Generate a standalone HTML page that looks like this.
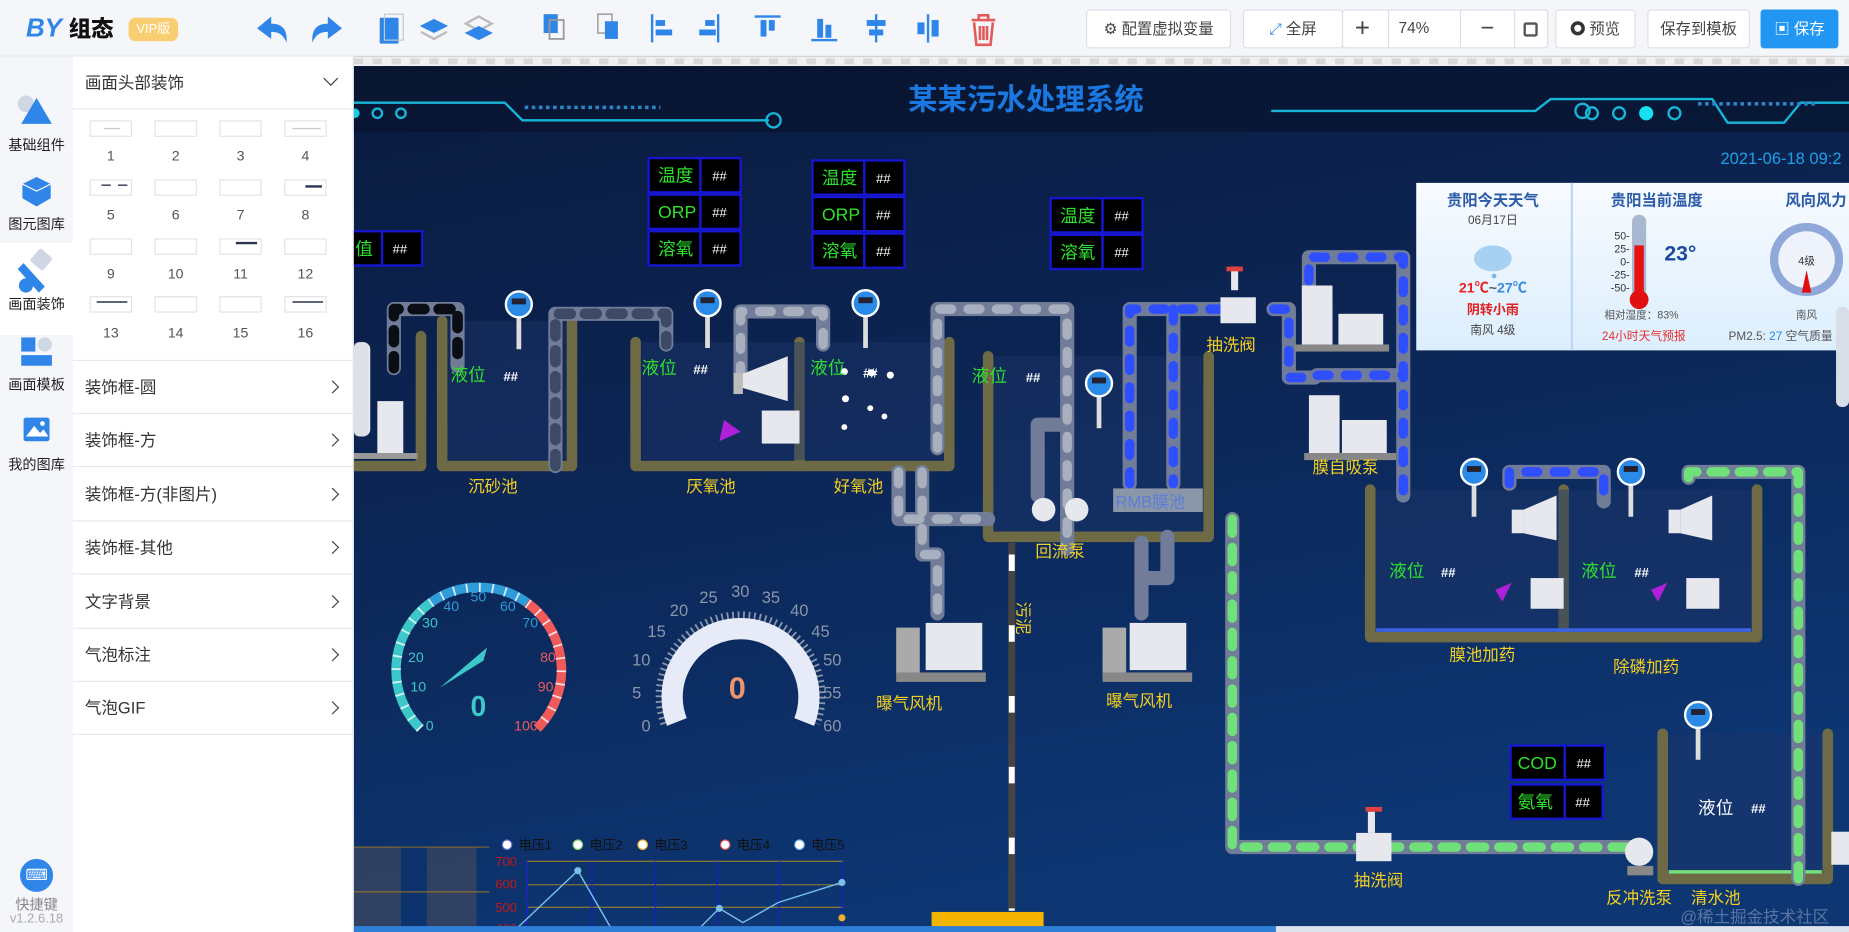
<!DOCTYPE html>
<html><head><meta charset="utf-8">
<style>
*{margin:0;padding:0;box-sizing:border-box}
html,body{width:1849px;height:932px;overflow:hidden;background:#fff}
#root{position:absolute;left:0;top:0;width:1568px;height:790px;transform:scale(1.17921,1.17975);transform-origin:0 0;font-family:"Liberation Sans","Noto Sans CJK SC",sans-serif;color:#333}
.hdr{position:absolute;left:0;top:0;width:1568px;height:48px;background:#f4f6f9;border-bottom:1px solid #e4e7ed}
.logo{position:absolute;left:22px;top:10px;font-size:22px;font-weight:bold;font-style:italic;color:#2f86e8}
.logo b{font-style:normal;color:#111;font-size:19px}
.vip{position:absolute;left:109px;top:15px;width:42px;height:20px;border-radius:6px;background:#f9cd72;color:#fff;font-size:11px;text-align:center;line-height:20px}
.btn{position:absolute;top:8px;height:33px;border:1px solid #dcdfe6;background:#fff;border-radius:3px;font-size:13px;color:#444;line-height:31px;text-align:center}
.side{position:absolute;left:0;top:48px;width:62px;height:742px;background:#f4f6f9}
.side .it{position:absolute;left:0;width:62px;text-align:center;font-size:12px;color:#222}
.panel{position:absolute;left:62px;top:48px;width:238px;height:742px;background:#fff;border-right:1px solid #e4e7ed}
.row{position:absolute;left:0;width:238px;height:45px;border-bottom:1px solid #e8e8e8;font-size:14px;color:#333;line-height:45px;padding-left:10px}
.row.ch:after{content:"";position:absolute;right:14px;top:18px;width:7px;height:7px;border-top:1.5px solid #444;border-right:1.5px solid #444;transform:rotate(45deg)}
.th{position:absolute;width:36px;height:14px;border:1px solid #e3e3e3}
.tn{position:absolute;width:36px;text-align:center;font-size:12px;color:#555}
.cv{position:absolute;left:300px;top:48px;width:1268px;height:742px;overflow:hidden}
</style></head><body><div id="root">

<div class="hdr">
 <div class="logo">BY <b>组态</b></div>
 <div class="vip">VIP版</div>
 <svg style="position:absolute;left:210px;top:8px" width="640" height="34" viewBox="0 0 640 34">
  <g fill="#2f86e8">
   <path d="M8 16 L20 6 L20 12 C30 12 34 18 33 28 C30 21 26 19 20 19 L20 25 Z"/>
   <path d="M80 16 L68 6 L68 12 C58 12 54 18 55 28 C58 21 62 19 68 19 L68 25 Z"/>
   <g transform="translate(10 0)">
   <rect x="102" y="7" width="16" height="22" rx="1"/><rect x="106" y="4" width="16" height="22" fill="none" stroke="#c0c8d4"/>
   <path d="M148 8 L160 14 L148 20 L136 14Z"/><path d="M137 19 L148 25 L159 19" fill="none" stroke="#bbb" stroke-width="2"/>
   <path d="M186 6 L197 12 L186 18 L175 12Z" fill="none" stroke="#bbb" stroke-width="2"/><path d="M186 14 L198 20 L186 26 L174 20Z"/>
   <rect x="241" y="4" width="12" height="16"/><rect x="246" y="9" width="12" height="16" fill="none" stroke="#999" stroke-width="1.5"/>
   <rect x="287" y="4" width="12" height="16" fill="none" stroke="#aaa" stroke-width="1.5"/><rect x="293" y="10" width="11" height="15"/>
   <rect x="332" y="4" width="2" height="24"/><rect x="336" y="9" width="8" height="5"/><rect x="336" y="17" width="14" height="5"/>
   <rect x="388" y="4" width="2" height="24"/><rect x="378" y="9" width="8" height="5"/><rect x="373" y="17" width="14" height="5"/>
   <rect x="420" y="5" width="22" height="2"/><rect x="425" y="9" width="5" height="14"/><rect x="432" y="9" width="5" height="9"/>
   <rect x="468" y="25" width="22" height="2"/><rect x="473" y="8" width="5" height="16"/><rect x="480" y="13" width="5" height="11"/>
   <rect x="522" y="4" width="2" height="24"/><rect x="515" y="9" width="16" height="5"/><rect x="517" y="17" width="12" height="5"/>
   <rect x="566" y="4" width="2" height="24"/><rect x="558" y="11" width="6" height="10"/><rect x="570" y="9" width="6" height="14"/>
   </g>
  </g>
  <g fill="none" stroke="#e35a5a" stroke-width="2.2"><path d="M614 9 H634 M620 9 V5 H628 V9 M616 11 L618 30 H630 L632 11 M621 14 V26 M624 14 V26 M627 14 V26"/></g>
 </svg>
 <div class="btn" style="left:921px;width:123px">⚙ 配置虚拟变量</div>
 <div class="btn" style="left:1054px;width:85px"><span style="color:#2f86e8">⤢</span> 全屏</div>
 <div class="btn" style="left:1138px;width:175px;text-align:left">
  <span style="position:absolute;left:10px;font-size:22px;line-height:29px">+</span>
  <span style="position:absolute;left:38px;top:-1px;width:62px;height:33px;border-left:1px solid #dcdfe6;border-right:1px solid #dcdfe6;padding-left:8px">74%</span>
  <span style="position:absolute;left:100px;width:46px;height:31px;border-right:1px solid #dcdfe6;text-align:center;font-size:20px">−</span>
  <span style="position:absolute;left:153px;top:10px;width:12px;height:12px;border:2px solid #555;border-radius:2px"></span></div>
 <div class="btn" style="left:1319px;width:68px"><span style="display:inline-block;width:12px;height:12px;border-radius:50%;border:3px solid #333;vertical-align:-1px"></span> 预览</div>
 <div class="btn" style="left:1397px;width:87px">保存到模板</div>
 <div class="btn" style="left:1493px;width:66px;background:#2196f3;border-color:#2196f3;color:#fff">▣ 保存</div>
</div>

<div class="side">
 <svg style="position:absolute;left:0;top:0" width="62" height="360">
  <circle cx="22" cy="40" r="7" fill="#cfd6e4"/><path d="M31 35 L44 57 H18Z" fill="#2f86e8"/>
  <path d="M31 102 L43 108 V120 L31 127 L19 120 V108Z" fill="#2f86e8"/><path d="M19 108 L31 114 L43 108" stroke="#fff" stroke-width="1" fill="none"/>
  <rect x="0" y="158" width="62" height="78" fill="#fff"/>
  <rect x="28" y="165" width="14" height="14" rx="2" fill="#cfd6e4" transform="rotate(40 35 172)"/><path d="M20 175 L38 195 L33 200 L15 180Z" fill="#2f86e8"/><circle cx="22" cy="194" r="6" fill="#2f86e8"/>
  <rect x="18" y="238" width="12" height="12" fill="#2f86e8"/><circle cx="38" cy="244" r="6" fill="#cfd6e4"/><rect x="18" y="253" width="26" height="9" fill="#2f86e8"/>
  <rect x="20" y="306" width="22" height="20" rx="2" fill="#2f86e8"/><path d="M22 322 L29 313 L34 319 L37 316 L41 322Z" fill="#fff"/><circle cx="36" cy="311" r="2" fill="#fff"/>
 </svg>
 <div class="it" style="top:66px">基础组件</div>
 <div class="it" style="top:133px">图元图库</div>
 <div class="it" style="top:201px">画面装饰</div>
 <div class="it" style="top:269px">画面模板</div>
 <div class="it" style="top:337px">我的图库</div>
 <div style="position:absolute;left:17px;top:680px;width:28px;height:28px;border-radius:50%;background:#2f86e8;color:#fff;font-size:13px;text-align:center;line-height:28px">⌨</div>
 <div class="it" style="top:710px;color:#888">快捷键</div>
 <div class="it" style="top:725px;color:#aaa;font-size:11px">v1.2.6.18</div>
</div>

<div class="panel">
 <div class="row" style="top:0;font-size:14px">画面头部装饰</div>
 <div style="position:absolute;right:14px;top:14px;width:9px;height:9px;border-right:1.5px solid #444;border-bottom:1.5px solid #444;transform:rotate(45deg)"></div>
 <div class="th" style="left:14px;top:54px"></div><div class="th" style="left:69px;top:54px"></div><div class="th" style="left:124px;top:54px"></div><div class="th" style="left:179px;top:54px"></div>
 <div class="tn" style="left:14px;top:77px">1</div><div class="tn" style="left:69px;top:77px">2</div><div class="tn" style="left:124px;top:77px">3</div><div class="tn" style="left:179px;top:77px">4</div>
 <div class="th" style="left:14px;top:104px"></div><div class="th" style="left:69px;top:104px"></div><div class="th" style="left:124px;top:104px"></div><div class="th" style="left:179px;top:104px"></div>
 <div class="tn" style="left:14px;top:127px">5</div><div class="tn" style="left:69px;top:127px">6</div><div class="tn" style="left:124px;top:127px">7</div><div class="tn" style="left:179px;top:127px">8</div>
 <div class="th" style="left:14px;top:154px"></div><div class="th" style="left:69px;top:154px"></div><div class="th" style="left:124px;top:154px"></div><div class="th" style="left:179px;top:154px"></div>
 <div class="tn" style="left:14px;top:177px">9</div><div class="tn" style="left:69px;top:177px">10</div><div class="tn" style="left:124px;top:177px">11</div><div class="tn" style="left:179px;top:177px">12</div>
 <div class="th" style="left:14px;top:203px"></div><div class="th" style="left:69px;top:203px"></div><div class="th" style="left:124px;top:203px"></div><div class="th" style="left:179px;top:203px"></div>
 <div class="tn" style="left:14px;top:227px">13</div><div class="tn" style="left:69px;top:227px">14</div><div class="tn" style="left:124px;top:227px">15</div><div class="tn" style="left:179px;top:227px">16</div>
 <svg style="position:absolute;left:0;top:0" width="238" height="260"><g stroke="#2a3350" stroke-width="1.2">
  <path d="M24 109 H32 M38 109 H46"/><path d="M197 110 H211" stroke-width="2"/><path d="M138 158 H156" stroke-width="2"/><path d="M20 208 H46"/><path d="M186 208 H212"/><path d="M26 61 H40" stroke="#ccc"/><path d="M186 61 H210" stroke="#ccc"/></g></svg>
 <div style="position:absolute;left:0;top:257px;width:238px;border-top:1px solid #e8e8e8"></div>
 <div class="row ch" style="top:258px">装饰框-圆</div>
 <div class="row ch" style="top:303px">装饰框-方</div>
 <div class="row ch" style="top:349px">装饰框-方(非图片)</div>
 <div class="row ch" style="top:394px">装饰框-其他</div>
 <div class="row ch" style="top:440px">文字背景</div>
 <div class="row ch" style="top:485px">气泡标注</div>
 <div class="row ch" style="top:530px">气泡GIF</div>
</div>

<div class="cv">
<svg width="1268" height="742" viewBox="300 48 1268 742" style="position:absolute;left:0;top:0;font-family:'Liberation Sans','Noto Sans CJK SC',sans-serif">
 <defs>
  <linearGradient id="bg" x1="0" y1="0" x2="0.3" y2="1"><stop offset="0" stop-color="#0a1a3d"/><stop offset="0.5" stop-color="#0c2656"/><stop offset="1" stop-color="#0d3673"/></linearGradient>
  <linearGradient id="wt" x1="0" y1="0" x2="0" y2="1"><stop offset="0" stop-color="#f8fbff"/><stop offset="1" stop-color="#dceefd"/></linearGradient>
 </defs>
 <rect x="300" y="48" width="1268" height="742" fill="url(#bg)"/>
 <rect x="300" y="48" width="1268" height="8" fill="#f0f0f0"/>
 <path d="M300 52 H1568" stroke="#d8d8d8" stroke-width="5" stroke-dasharray="8 8"/>
 <rect x="300" y="56" width="1268" height="56" fill="#07142e" opacity="0.7"/>
 <path d="M300 87 H428 L443 102 H652" stroke="#17b6d8" stroke-width="2" fill="none"/><circle cx="656" cy="102" r="6" stroke="#17b6d8" stroke-width="2" fill="none"/>
 <path d="M445 91 H560" stroke="#2a86c8" stroke-width="3" stroke-dasharray="3 3"/>
 <circle cx="301" cy="96" r="4" fill="#17d0e8"/><circle cx="320" cy="96" r="4" stroke="#17b6d8" stroke-width="2" fill="none"/><circle cx="340" cy="96" r="4" stroke="#17b6d8" stroke-width="2" fill="none"/>
 <path d="M1078 94 H1302 L1315 84 H1452 L1465 104 H1513 L1527 87 H1568" stroke="#17b6d8" stroke-width="2" fill="none"/><circle cx="1342" cy="94" r="6" stroke="#17b6d8" stroke-width="2" fill="none"/>
 <path d="M1440 88 H1540" stroke="#2a86c8" stroke-width="3" stroke-dasharray="3 3"/>
 <circle cx="1350" cy="96" r="5" stroke="#17b6d8" stroke-width="2" fill="none"/><circle cx="1373" cy="96" r="5" stroke="#17b6d8" stroke-width="2" fill="none"/><circle cx="1396" cy="96" r="6" fill="#17e0f0"/><circle cx="1420" cy="96" r="5" stroke="#17b6d8" stroke-width="2" fill="none"/>
 <text x="870" y="93" text-anchor="middle" font-size="25" font-weight="bold" fill="#1a78e0">某某污水处理系统</text>
 <text x="1459" y="139" font-size="14" fill="#1ea0e8">2021-06-18  09:2</text>

 <g fill="none" stroke="#6d6a45" stroke-width="9" stroke-linejoin="round" stroke-linecap="round">
  <path d="M300 395 H357 V285"/>
  <path d="M375 272 V395 H485 V272"/>
  <path d="M539 290 V395 H805 V290"/><path d="M678 290 V395"/>
  <path d="M838 302 V455 H1025 V302"/>
  <path d="M1162 415 V540 H1490 V415"/><path d="M1326 415 V540"/>
  <path d="M1410 622 V745 H1550 V622"/>
 </g>
 <g fill="#1d3568" opacity="0.45"><rect x="380" y="272" width="100" height="118"/><rect x="544" y="290" width="256" height="100"/><rect x="843" y="302" width="177" height="148"/><rect x="1167" y="415" width="318" height="120"/><rect x="1415" y="622" width="130" height="118"/></g>
 <path d="M1167 534 H1485" stroke="#3a63e8" stroke-width="3"/><path d="M1415 739 H1545" stroke="#78e07a" stroke-width="3"/>

 <g fill="none" stroke-linecap="round" stroke-linejoin="round">
  <g stroke="#707c98" stroke-width="12">
   <path d="M334 312 V262 H388 V310"/><path d="M471 395 V266 H565 V292"/>
   <path d="M628 320 V264 H698 V292"/><path d="M795 380 V262 H905 V465"/>
   <path d="M762 400 V440 H838"/><path d="M782 400 V470 H795 V520"/>
   <path d="M880 420 V360 H905"/>
   <path d="M958 410 V262 H1040"/><path d="M995 262 V410"/><path d="M1080 262 H1093 V320 H1115"/><path d="M1110 262 V218 H1190 V420"/><path d="M1117 318 H1190"/>
   <path d="M968 460 V520"/><path d="M968 490 H990 V455"/>
   <path d="M1045 440 V718 H1390"/><path d="M1432 405 V400 H1525 V745"/>
   <path d="M1280 410 V400 H1360 V425"/>
  </g>
  <g stroke="#0b0d14" stroke-width="9" stroke-dasharray="10 12"><path d="M334 312 V262 H388 V310"/></g>
  <g stroke="#3d4a66" stroke-width="9" stroke-dasharray="10 12"><path d="M471 395 V266 H565 V292"/></g>
  <g stroke="#a8b0c0" stroke-width="8" stroke-dasharray="10 14"><path d="M628 320 V264 H698 V292"/><path d="M795 380 V262 H905 V465"/><path d="M762 400 V440 H838"/><path d="M782 400 V470 H795 V520"/></g>
  <g stroke="#2f4fff" stroke-width="8" stroke-dasharray="10 14"><path d="M958 410 V262 H1040"/><path d="M995 262 V410"/><path d="M1080 262 H1093 V320 H1115"/><path d="M1110 262 V218 H1190 V420"/><path d="M1117 318 H1190"/><path d="M1280 410 V400 H1360 V425"/></g>
  <g stroke="#6fe07a" stroke-width="8" stroke-dasharray="12 12"><path d="M1045 440 V718 H1390"/><path d="M1432 405 V400 H1525 V745"/></g>
 </g>

 <g>
  <g transform="translate(440 258)"><rect x="-2" y="10" width="4" height="28" fill="#ddd"/><circle r="11" fill="#2a8ae8" stroke="#fff" stroke-width="2"/><rect x="-6" y="-5" width="12" height="5" fill="#223"/></g>
  <g transform="translate(600 257)"><rect x="-2" y="10" width="4" height="28" fill="#ddd"/><circle r="11" fill="#2a8ae8" stroke="#fff" stroke-width="2"/><rect x="-6" y="-5" width="12" height="5" fill="#223"/></g>
  <g transform="translate(734 257)"><rect x="-2" y="10" width="4" height="28" fill="#ddd"/><circle r="11" fill="#2a8ae8" stroke="#fff" stroke-width="2"/><rect x="-6" y="-5" width="12" height="5" fill="#223"/></g>
  <g transform="translate(932 325)"><rect x="-2" y="10" width="4" height="28" fill="#ddd"/><circle r="11" fill="#2a8ae8" stroke="#fff" stroke-width="2"/><rect x="-6" y="-5" width="12" height="5" fill="#223"/></g>
  <g transform="translate(1250 400)"><rect x="-2" y="10" width="4" height="28" fill="#ddd"/><circle r="11" fill="#2a8ae8" stroke="#fff" stroke-width="2"/><rect x="-6" y="-5" width="12" height="5" fill="#223"/></g>
  <g transform="translate(1383 400)"><rect x="-2" y="10" width="4" height="28" fill="#ddd"/><circle r="11" fill="#2a8ae8" stroke="#fff" stroke-width="2"/><rect x="-6" y="-5" width="12" height="5" fill="#223"/></g>
  <g transform="translate(1440 606)"><rect x="-2" y="10" width="4" height="28" fill="#ddd"/><circle r="11" fill="#2a8ae8" stroke="#fff" stroke-width="2"/><rect x="-6" y="-5" width="12" height="5" fill="#223"/></g>
 </g>

 <g fill="#e6e8ee">
  <rect x="300" y="290" width="14" height="80" rx="6"/><rect x="320" y="340" width="22" height="45"/><rect x="300" y="384" width="54" height="5" fill="#999"/>
  <path d="M627 318 L668 302 V340 L627 328Z"/><rect x="622" y="316" width="8" height="18" fill="#bbb"/><rect x="646" y="348" width="32" height="28"/>
  <path d="M614 356 L628 366 L610 374Z" fill="#b020d8"/>
  <rect x="1282" y="432" width="10" height="20"/><path d="M1292 432 L1320 420 V458 L1292 452Z"/><rect x="1298" y="490" width="28" height="26"/><path d="M1268 500 L1282 494 L1274 510Z" fill="#b020d8"/>
  <rect x="1415" y="432" width="10" height="20"/><path d="M1425 432 L1452 420 V458 L1425 452Z"/><rect x="1430" y="490" width="28" height="26"/><path d="M1400 500 L1414 494 L1406 510Z" fill="#b020d8"/>
  <rect x="1104" y="242" width="26" height="52"/><rect x="1135" y="266" width="38" height="28"/><rect x="1098" y="292" width="80" height="6" fill="#888"/>
  <rect x="1110" y="335" width="26" height="52"/><rect x="1138" y="356" width="38" height="28"/><rect x="1106" y="384" width="78" height="6" fill="#888"/>
  <rect x="1035" y="252" width="30" height="22"/><rect x="1044" y="226" width="6" height="20"/><rect x="1040" y="226" width="14" height="4" fill="#e04040"/>
  <rect x="1150" y="706" width="30" height="24"/><rect x="1160" y="688" width="6" height="18"/><rect x="1158" y="684" width="14" height="4" fill="#e04040"/>
  <rect x="760" y="532" width="20" height="40" fill="#aaa"/><rect x="785" y="528" width="48" height="40"/><rect x="760" y="570" width="76" height="8" fill="#888"/>
  <rect x="935" y="532" width="20" height="40" fill="#aaa"/><rect x="958" y="528" width="48" height="40"/><rect x="935" y="570" width="76" height="8" fill="#888"/>
  <circle cx="885" cy="432" r="10"/><circle cx="913" cy="432" r="10"/>
  <rect x="944" y="414" width="76" height="20" fill="#8a95a8"/>
  <circle cx="1390" cy="722" r="12"/><rect x="1380" y="734" width="22" height="8" fill="#888"/>
  <rect x="1553" y="705" width="15" height="28"/>
 </g>
 <text x="946" y="430" font-size="14" fill="#5a7fd8">RMB膜池</text>
 <g fill="#fff"><circle cx="716" cy="315" r="3"/><circle cx="739" cy="316" r="3"/><circle cx="755" cy="318" r="3"/><circle cx="717" cy="338" r="3"/><circle cx="738" cy="346" r="2.5"/><circle cx="750" cy="353" r="2.5"/><circle cx="716" cy="362" r="2.5"/></g>

 <path d="M858 460 V772" stroke="#444" stroke-width="6"/><path d="M858 470 V772" stroke="#fff" stroke-width="5" stroke-dasharray="14 46"/>
 <text x="863" y="510" font-size="14" fill="#f5d020" transform="rotate(90 863 510)">污泥</text>
 <rect x="790" y="773" width="95" height="17" fill="#f4b400"/>

 <g font-size="14" fill="#f5d020"><text x="397" y="417">沉砂池</text><text x="582" y="417">厌氧池</text><text x="707" y="417">好氧池</text><text x="878" y="472">回流泵</text>
  <text x="1113" y="401">膜自吸泵</text><text x="1023" y="297">抽洗阀</text><text x="743" y="601">曝气风机</text><text x="938" y="599">曝气风机</text>
  <text x="1229" y="560">膜池加药</text><text x="1368" y="570">除磷加药</text><text x="1148" y="751">抽洗阀</text><text x="1362" y="766">反冲洗泵</text><text x="1434" y="766">清水池</text></g>
 <g font-size="15" fill="#2ee02e"><text x="382" y="323">液位</text><text x="544" y="317">液位</text><text x="687" y="317">液位</text><text x="824" y="324">液位</text><text x="1178" y="489">液位</text><text x="1341" y="489">液位</text></g>
 <text x="1440" y="690" font-size="15" fill="#fff">液位</text>
 <g font-size="11" fill="#fff" font-weight="bold"><text x="427" y="323">##</text><text x="588" y="317">##</text><text x="732" y="320">##</text><text x="870" y="324">##</text><text x="1222" y="489">##</text><text x="1386" y="489">##</text><text x="1485" y="689">##</text></g>

 <g font-size="15">
  <g transform="translate(550 134)"><rect width="44" height="29" stroke="#1616d0" stroke-width="2"/><rect x="44" width="34" height="29" stroke="#1616d0" stroke-width="2"/><rect y="31" width="44" height="29" stroke="#1616d0" stroke-width="2"/><rect x="44" y="31" width="34" height="29" stroke="#1616d0" stroke-width="2"/><rect y="62" width="44" height="29" stroke="#1616d0" stroke-width="2"/><rect x="44" y="62" width="34" height="29" stroke="#1616d0" stroke-width="2"/>
   <text x="8" y="20" fill="#2ee02e">温度</text><text x="8" y="51" fill="#2ee02e">ORP</text><text x="8" y="82" fill="#2ee02e">溶氧</text><text x="54" y="19" fill="#fff" font-size="11">##</text><text x="54" y="50" fill="#fff" font-size="11">##</text><text x="54" y="81" fill="#fff" font-size="11">##</text></g>
  <g transform="translate(689 136)"><rect width="44" height="29" stroke="#1616d0" stroke-width="2"/><rect x="44" width="34" height="29" stroke="#1616d0" stroke-width="2"/><rect y="31" width="44" height="29" stroke="#1616d0" stroke-width="2"/><rect x="44" y="31" width="34" height="29" stroke="#1616d0" stroke-width="2"/><rect y="62" width="44" height="29" stroke="#1616d0" stroke-width="2"/><rect x="44" y="62" width="34" height="29" stroke="#1616d0" stroke-width="2"/>
   <text x="8" y="20" fill="#2ee02e">温度</text><text x="8" y="51" fill="#2ee02e">ORP</text><text x="8" y="82" fill="#2ee02e">溶氧</text><text x="54" y="19" fill="#fff" font-size="11">##</text><text x="54" y="50" fill="#fff" font-size="11">##</text><text x="54" y="81" fill="#fff" font-size="11">##</text></g>
  <g transform="translate(891 168)"><rect width="44" height="29" stroke="#1616d0" stroke-width="2"/><rect x="44" width="34" height="29" stroke="#1616d0" stroke-width="2"/><rect y="31" width="44" height="29" stroke="#1616d0" stroke-width="2"/><rect x="44" y="31" width="34" height="29" stroke="#1616d0" stroke-width="2"/>
   <text x="8" y="20" fill="#2ee02e">温度</text><text x="8" y="51" fill="#2ee02e">溶氧</text><text x="54" y="19" fill="#fff" font-size="11">##</text><text x="54" y="50" fill="#fff" font-size="11">##</text></g>
  <g transform="translate(280 196)"><rect width="44" height="29" stroke="#1616d0" stroke-width="2"/><rect x="44" width="34" height="29" stroke="#1616d0" stroke-width="2"/><text x="2" y="20" fill="#2ee02e">pH值</text><text x="53" y="19" fill="#fff" font-size="11">##</text></g>
  <g transform="translate(1281 632)"><rect width="46" height="29" stroke="#1616d0" stroke-width="2"/><rect x="46" width="34" height="29" stroke="#1616d0" stroke-width="2"/><rect y="33" width="46" height="29" stroke="#1616d0" stroke-width="2"/><rect x="46" y="33" width="32" height="29" stroke="#1616d0" stroke-width="2"/>
   <text x="6" y="20" fill="#2ee02e">COD</text><text x="6" y="53" fill="#2ee02e">氨氧</text><text x="56" y="19" fill="#fff" font-size="11">##</text><text x="55" y="52" fill="#fff" font-size="11">##</text></g>
 </g>

 <g transform="translate(406 568)" fill="none">
  <path d="M-49.5 49.5 A70 70 0 0 1 -41 -57" stroke="#3cc8c8" stroke-width="8"/>
  <path d="M-41 -57 A70 70 0 0 1 41 -57" stroke="#2f9bd8" stroke-width="8"/>
  <path d="M41 -57 A70 70 0 0 1 49.5 49.5" stroke="#f05a5a" stroke-width="8"/>
  <path d="M-49.5 49.5 A70 70 0 1 1 49.5 49.5" stroke="#fff" stroke-width="8" stroke-dasharray="1.5 9.5" opacity="0.8"/>
  <g font-size="12" fill="#3cc8c8" stroke="none"><text x="-45" y="51">0</text><text x="-58" y="18">10</text><text x="-60" y="-7">20</text><text x="-48" y="-36">30</text></g>
  <g font-size="12" fill="#2f9bd8" stroke="none"><text x="-30" y="-50">40</text><text x="-7" y="-58">50</text><text x="18" y="-50">60</text><text x="37" y="-36">70</text></g>
  <g font-size="12" fill="#f05a5a" stroke="none"><text x="52" y="-7">80</text><text x="50" y="18">90</text><text x="30" y="51">100</text></g>
  <path d="M-33 15 L7 -19 L4 -8Z" fill="#3cc8c8" stroke="none"/>
  <text x="-7" y="39" font-size="24" font-weight="bold" fill="#3cc8c8" stroke="none">0</text>
 </g>
 <g transform="translate(628 590)">
  <path d="M-63 23 A67 67 0 1 1 63 23" fill="none" stroke="#8a95a8" stroke-width="10" stroke-dasharray="1.5 3"/>
  <path d="M-54 22 A58 58 0 1 1 54 22" fill="none" stroke="#e6ebf7" stroke-width="18"/>
  <g font-size="14" fill="#8a95a8"><text x="-84" y="30">0</text><text x="-92" y="2">5</text><text x="-92" y="-26">10</text><text x="-79" y="-50">15</text><text x="-60" y="-68">20</text><text x="-35" y="-79">25</text><text x="-8" y="-84">30</text><text x="18" y="-79">35</text><text x="42" y="-68">40</text><text x="60" y="-50">45</text><text x="70" y="-26">50</text><text x="70" y="2">55</text><text x="70" y="30">60</text></g>
  <text x="-10" y="2" font-size="26" font-weight="bold" fill="#f0956a">0</text>
 </g>

 <rect x="300" y="718" width="40" height="72" fill="#3a4560" opacity="0.8"/><rect x="362" y="718" width="42" height="72" fill="#3a4560" opacity="0.8"/>
 <g stroke="#a07820" stroke-width="0.8"><path d="M300 718 H415 M300 756 H415"/></g>
 <g font-size="11">
  <g stroke="#b08a20" stroke-width="0.8"><path d="M447 730 H715 M447 750 H715 M447 769 H715 M447 788 H715"/></g>
  <g stroke="#1a20d0" stroke-width="1"><path d="M447 730 V790 M502 730 V790 M556 730 V790 M608 730 V790 M661 730 V790 M714 730 V790"/></g>
  <g fill="#c01818"><text x="420" y="734">700</text><text x="420" y="753">600</text><text x="420" y="773">500</text><text x="420" y="791">400</text></g>
  <path d="M435 790 L490 738 L520 790 M590 790 L610 770 L630 782 L660 765 L714 748" stroke="#7ac0e8" stroke-width="1.2" fill="none"/>
  <circle cx="490" cy="738" r="3" fill="#7ac0e8"/><circle cx="610" cy="770" r="3" fill="#7ac0e8"/><circle cx="714" cy="748" r="3" fill="#7ac0e8"/><circle cx="714" cy="778" r="3" fill="#f0b030"/>
  <g fill="#111"><circle cx="430" cy="716" r="4" fill="#fff" stroke="#6870d0"/><text x="440" y="720">电压1</text><circle cx="490" cy="716" r="4" fill="#fff" stroke="#8ad070"/><text x="500" y="720">电压2</text><circle cx="545" cy="716" r="4" fill="#fff" stroke="#f0b030"/><text x="555" y="720">电压3</text><circle cx="615" cy="716" r="4" fill="#fff" stroke="#e05050"/><text x="625" y="720">电压4</text><circle cx="678" cy="716" r="4" fill="#fff" stroke="#7ac0e8"/><text x="688" y="720">电压5</text></g>
 </g>

 <rect x="1201" y="155" width="367" height="142" fill="url(#wt)"/>
 <path d="M1333 155 V297" stroke="#bcd8f2" stroke-width="2"/>
 <g font-size="13" text-anchor="middle">
  <text x="1266" y="174" fill="#2a5aa8" font-weight="bold">贵阳今天天气</text><text x="1266" y="190" fill="#444" font-size="10">06月17日</text>
  <ellipse cx="1266" cy="219" rx="16" ry="11" fill="#a8d0f0"/><circle cx="1267" cy="234" r="2" fill="#7ab8e8"/>
  <text x="1266" y="248" font-weight="bold" font-size="12"><tspan fill="#e82020">21℃</tspan><tspan fill="#555">~</tspan><tspan fill="#3a8ad8">27℃</tspan></text>
  <text x="1266" y="266" fill="#e02020" font-size="11" font-weight="bold">阴转小雨</text><text x="1266" y="283" fill="#444" font-size="10">南风 4级</text>
  <text x="1405" y="174" fill="#2a5aa8" font-weight="bold">贵阳当前温度</text>
  <rect x="1384" y="182" width="12" height="70" rx="6" fill="#a8b8d0"/><rect x="1386" y="208" width="8" height="44" fill="#e81010"/><circle cx="1390" cy="254" r="8" fill="#e01010"/>
  <g font-size="9" fill="#333" text-anchor="end"><text x="1382" y="203">50-</text><text x="1382" y="214">25-</text><text x="1382" y="225">0-</text><text x="1382" y="236">-25-</text><text x="1382" y="247">-50-</text></g>
  <text x="1425" y="221" fill="#1a4aa0" font-size="18" font-weight="bold">23°</text>
  <text x="1392" y="270" fill="#555" font-size="9">相对湿度：83%</text><text x="1394" y="288" fill="#e83030" font-size="10">24小时天气预报</text>
  <text x="1540" y="174" fill="#2a5aa8" font-weight="bold">风向风力</text>
  <circle cx="1532" cy="220" r="31" fill="#8fa8d8"/><circle cx="1532" cy="220" r="24" fill="#eef2fa"/><text x="1532" y="224" font-size="9" fill="#333">4级</text>
  <path d="M1532 229 L1536 248 H1528Z" fill="#e01010"/><text x="1532" y="270" font-size="9" fill="#555">南风</text>
  <text x="1510" y="288" font-size="10" fill="#555">PM2.5: <tspan fill="#2a8ad8">27</tspan>  空气质量</text>
 </g>
 <rect x="1557" y="260" width="11" height="85" rx="5" fill="#d8dde6"/>
 <rect x="300" y="290" width="12" height="80" rx="4" fill="#d8dde6" opacity="0.7"/>
 <text x="1425" y="782" font-size="14" fill="#8aa0c0" opacity="0.6">@稀土掘金技术社区</text>
 <rect x="300" y="785" width="782" height="5" fill="#2f7fd6"/><rect x="1082" y="785" width="486" height="5" fill="#dde3ec"/>
</svg>
</div>
</div></body></html>
